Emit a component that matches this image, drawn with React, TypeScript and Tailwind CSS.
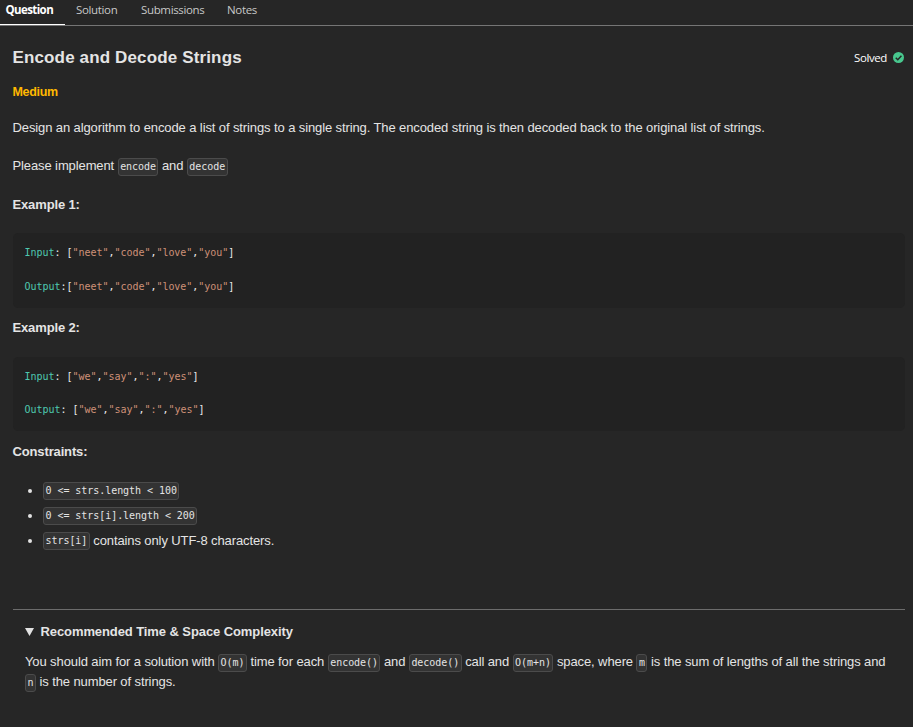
import type { ReactNode } from "react";

const SANS = "font-['Liberation_Sans',Arial,sans-serif]";
const UI = "font-['Open_Sans','Noto_Sans',sans-serif]";
const MONO = "font-['DejaVu_Sans_Mono',monospace]";

function Code({ children }: { children: ReactNode }) {
  return (
    <code
      className={`${MONO} inline-block h-[18px] rounded-[3px] border border-[#4b4b4b] bg-[#333333] px-[1.5px] align-middle text-[10px] leading-[16px] tracking-[-0.05px] whitespace-pre text-[#e4e4e4]`}
    >
      {children}
    </code>
  );
}

function CodeLine({ label, gap, items }: { label: string; gap: string; items: string[] }) {
  return (
    <div className="h-[17px] leading-[17px] whitespace-pre">
      <span className="text-[#4ec9b0]">{label}</span>:{gap}[
      {items.map((item, i) => (
        <span key={i}>
          {i > 0 && ","}
          <span className="text-[#ce9178]">"{item}"</span>
        </span>
      ))}
      ]
    </div>
  );
}

function CodeBlock({ size, children }: { size: string; children: ReactNode }) {
  return (
    <div
      className={`${MONO} ${size} flex flex-col rounded-[5px] bg-[#222222] pt-[11px] pl-[11.5px] text-[10px] tracking-[-0.03px] text-[#ececec]`}
    >
      {children}
    </div>
  );
}

function Heading({ children }: { children: ReactNode }) {
  return <h2 className="-ml-[0.5px] h-[20px] leading-[20px] font-bold tracking-[-0.14px]">{children}</h2>;
}

export default function App() {
  return (
    <div className={`${SANS} h-[727px] w-[913px] overflow-hidden bg-[#262626] text-[13px] tracking-[-0.107px] text-[#e4e4e4]`}>
      <nav className={`${UI} flex h-[26px] border-b border-[#757575] text-[11.5px] leading-[20px] tracking-[-0.35px] text-[#c8c8c8]`}>
        <div className="h-[25px] w-[65px] border-b border-white pl-[5.5px] font-bold tracking-[-0.6px] text-white">Question</div>
        <div className="w-[65px] pl-[11px]">Solution</div>
        <div className="w-[86px] pl-[11px]">Submissions</div>
        <div className="pl-[11px]">Notes</div>
      </nav>

      <main className="pr-[8px] pl-[13px]">
        <header className="flex h-[63px] items-center justify-between">
          <h1 className="-ml-[0.5px] text-[17px] font-bold tracking-[0.14px]">Encode and Decode Strings</h1>
          <div className={`${UI} flex items-center gap-[6px] pr-px text-[11.5px] tracking-[-0.4px] text-white`}>
            <span>Solved</span>
            <svg className="-mt-px size-[11px]" viewBox="0 0 12 12">
              <circle cx="6" cy="6" r="6" fill="#48c78e" />
              <path d="M3 6.2 5.2 8.4 9.2 4.1" fill="none" stroke="#262626" strokeWidth="1.6" />
            </svg>
          </div>
        </header>
        <div className="-mt-[5px] -ml-[0.5px] h-[20px] text-[12.5px] leading-[16px] font-bold tracking-[-0.3px] text-[#ffb800]">Medium</div>
        <p className="mt-[14px] -ml-[0.5px] h-[20px] leading-[20px]">
          Design an algorithm to encode a list of strings to a single string. The encoded string is then decoded back to the original list of strings.
        </p>
        <p className="mt-[18px] mb-[19px] -ml-[0.5px] h-[20px] leading-[20px]">
          Please implement <Code>encode</Code> and <Code>decode</Code>
        </p>
        <Heading>Example 1:</Heading>
        <div className="mt-[18px] mb-[10px]">
          <CodeBlock size="h-[75px] gap-[17px]">
            <CodeLine label="Input" gap=" " items={["neet", "code", "love", "you"]} />
            <CodeLine label="Output" gap="" items={["neet", "code", "love", "you"]} />
          </CodeBlock>
        </div>
        <Heading>Example 2:</Heading>
        <div className="mt-[19px] mb-[11px]">
          <CodeBlock size="h-[74px] gap-[16px]">
            <CodeLine label="Input" gap=" " items={["we", "say", ":", "yes"]} />
            <CodeLine label="Output" gap=" " items={["we", "say", ":", "yes"]} />
          </CodeBlock>
        </div>
        <Heading>Constraints:</Heading>
        <ul className="mt-[19px] flex flex-col gap-[5px] pl-[15px]">
          {[
            <Code key="a">{"0 <= strs.length < 100"}</Code>,
            <Code key="b">{"0 <= strs[i].length < 200"}</Code>,
            <span key="c" className="-mt-px"><Code>strs[i]</Code> contains only UTF-8 characters.</span>,
          ].map((item, i) => (
            <li key={i} className="flex h-[20px] items-center gap-[11px] leading-[20px]">
              <span className="-mt-px size-[4px] rounded-full bg-[#e2e2e2]" />
              {item}
            </li>
          ))}
        </ul>
        <section className="mt-[58px] border-t border-[#6c6c6c] pt-[12px] pl-[12px]">
          <h3 className="flex h-[20px] items-center gap-[6.5px] leading-[20px] font-bold tracking-[-0.09px]">
            <svg className="h-[8px] w-[9px]" viewBox="0 0 9 8">
              <path d="M0 0H9L4.5 8Z" fill="#e2e2e2" />
            </svg>
            Recommended Time &amp; Space Complexity
          </h3>
          <p className="mt-[10px] leading-[20px]">
            You should aim for a solution with <Code>O(m)</Code> time for each <Code>encode()</Code> and <Code>decode()</Code> call and <Code>O(m+n)</Code> space, where <Code>m</Code> is the sum of lengths of all the strings and
            <br />
            <Code>n</Code> is the number of strings.
          </p>
        </section>
      </main>
    </div>
  );
}
